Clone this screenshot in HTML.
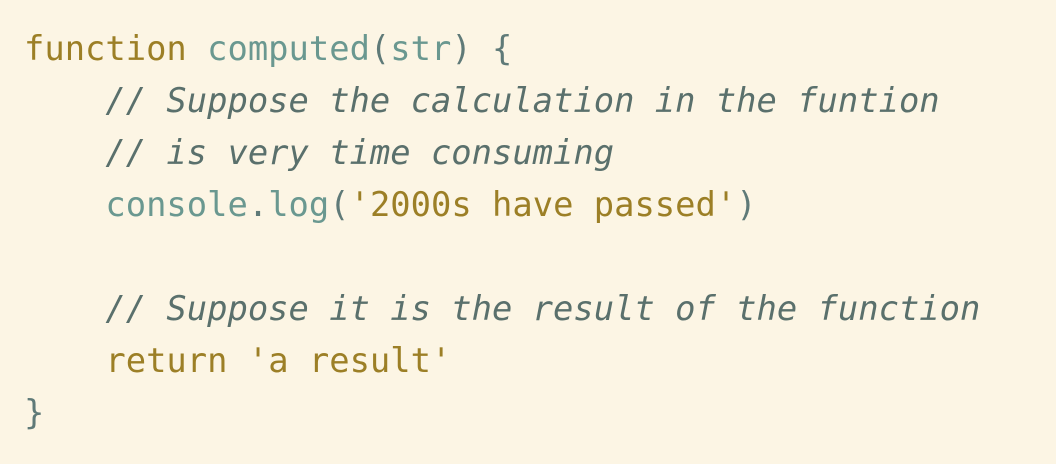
<!DOCTYPE html>
<html><head><style>
html,body{margin:0;padding:0;background:#fcf5e4;width:1056px;height:464px;overflow:hidden}
pre{margin:0;position:absolute;left:24px;top:23px;font-family:"DejaVu Sans Mono","Liberation Mono",monospace;font-size:33.8px;line-height:52px;color:#5f7a78}
.k{color:#9c7f26}.f{color:#6a9890}.c{color:#5a706c;font-style:italic}.s{color:#9c7f26}.p{color:#5f7a78}
</style></head><body>
<pre><span class="k">function</span> <span class="f">computed</span><span class="p">(</span><span class="f">str</span><span class="p">) {</span>
    <span class="c">// Suppose the calculation in the funtion</span>
    <span class="c">// is very time consuming</span>
    <span class="f">console</span><span class="p">.</span><span class="f">log</span><span class="p">(</span><span class="s">'2000s have passed'</span><span class="p">)</span>

    <span class="c">// Suppose it is the result of the function</span>
    <span class="k">return</span> <span class="s">'a result'</span>
<span class="p">}</span></pre>
</body></html>
